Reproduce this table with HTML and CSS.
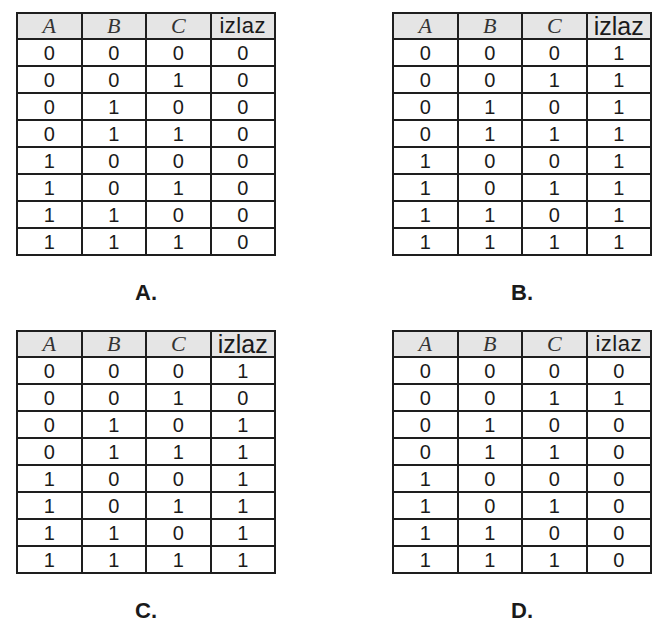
FILE: index.html
```html
<!DOCTYPE html>
<html>
<head>
<meta charset="utf-8">
<link rel="stylesheet" href="styles.css">
</head>
<body>
<div class="page">
  <div class="panel">
    <table class="tt">
      <tr class="hd"><th class="v">A</th><th class="v">B</th><th class="v">C</th><th class="out">izlaz</th></tr>
      <tr><td>0</td><td>0</td><td>0</td><td>0</td></tr>
      <tr><td>0</td><td>0</td><td>1</td><td>0</td></tr>
      <tr><td>0</td><td>1</td><td>0</td><td>0</td></tr>
      <tr><td>0</td><td>1</td><td>1</td><td>0</td></tr>
      <tr><td>1</td><td>0</td><td>0</td><td>0</td></tr>
      <tr><td>1</td><td>0</td><td>1</td><td>0</td></tr>
      <tr><td>1</td><td>1</td><td>0</td><td>0</td></tr>
      <tr><td>1</td><td>1</td><td>1</td><td>0</td></tr>
    </table>
    <div class="label">A.</div>
  </div>
  <div class="panel">
    <table class="tt">
      <tr class="hd"><th class="v">A</th><th class="v">B</th><th class="v">C</th><th class="out big">izlaz</th></tr>
      <tr><td>0</td><td>0</td><td>0</td><td>1</td></tr>
      <tr><td>0</td><td>0</td><td>1</td><td>1</td></tr>
      <tr><td>0</td><td>1</td><td>0</td><td>1</td></tr>
      <tr><td>0</td><td>1</td><td>1</td><td>1</td></tr>
      <tr><td>1</td><td>0</td><td>0</td><td>1</td></tr>
      <tr><td>1</td><td>0</td><td>1</td><td>1</td></tr>
      <tr><td>1</td><td>1</td><td>0</td><td>1</td></tr>
      <tr><td>1</td><td>1</td><td>1</td><td>1</td></tr>
    </table>
    <div class="label">B.</div>
  </div>
  <div class="panel">
    <table class="tt">
      <tr class="hd"><th class="v">A</th><th class="v">B</th><th class="v">C</th><th class="out big">izlaz</th></tr>
      <tr><td>0</td><td>0</td><td>0</td><td>1</td></tr>
      <tr><td>0</td><td>0</td><td>1</td><td>0</td></tr>
      <tr><td>0</td><td>1</td><td>0</td><td>1</td></tr>
      <tr><td>0</td><td>1</td><td>1</td><td>1</td></tr>
      <tr><td>1</td><td>0</td><td>0</td><td>1</td></tr>
      <tr><td>1</td><td>0</td><td>1</td><td>1</td></tr>
      <tr><td>1</td><td>1</td><td>0</td><td>1</td></tr>
      <tr><td>1</td><td>1</td><td>1</td><td>1</td></tr>
    </table>
    <div class="label">C.</div>
  </div>
  <div class="panel">
    <table class="tt">
      <tr class="hd"><th class="v">A</th><th class="v">B</th><th class="v">C</th><th class="out">izlaz</th></tr>
      <tr><td>0</td><td>0</td><td>0</td><td>0</td></tr>
      <tr><td>0</td><td>0</td><td>1</td><td>1</td></tr>
      <tr><td>0</td><td>1</td><td>0</td><td>0</td></tr>
      <tr><td>0</td><td>1</td><td>1</td><td>0</td></tr>
      <tr><td>1</td><td>0</td><td>0</td><td>0</td></tr>
      <tr><td>1</td><td>0</td><td>1</td><td>0</td></tr>
      <tr><td>1</td><td>1</td><td>0</td><td>0</td></tr>
      <tr><td>1</td><td>1</td><td>1</td><td>0</td></tr>
    </table>
    <div class="label">D.</div>
  </div>
</div>
</body>
</html>
```
FILE: styles.css
```css
html, body {
  margin: 0;
  padding: 0;
  background: #ffffff;
}
.page {
  display: grid;
  grid-template-columns: 262px 262px;
  column-gap: 114px;
  row-gap: 0;
  padding: 12px 0 0 15px;
  font-family: "Liberation Sans", Arial, sans-serif;
  color: #1a1a1a;
}
.panel {
  display: flex;
  flex-direction: column;
  align-items: center;
  height: 318px;
}
.tt {
  border-collapse: collapse;
  table-layout: fixed;
  width: 260px;
}
.tt th, .tt td {
  border: 2px solid #1e1e1e;
  padding: 0;
  text-align: center;
  vertical-align: middle;
  font-size: 20px;
  font-weight: normal;
  line-height: 20px;
}
.tt td {
  height: 25px;
}
.hd th {
  background: #e5e5e5;
  height: 24px;
}
.v {
  font-family: "Liberation Serif", "Times New Roman", serif;
  font-style: italic;
  color: #333;
}
.tt th.v {
  font-size: 22px;
}
.tt th.out {
  font-size: 22px;
  letter-spacing: 0.5px;
}
.tt th.big {
  font-size: 25px;
  letter-spacing: 0;
}
.label {
  margin-top: 24px;
  font-size: 22px;
  font-weight: bold;
  line-height: 25px;
}
```
